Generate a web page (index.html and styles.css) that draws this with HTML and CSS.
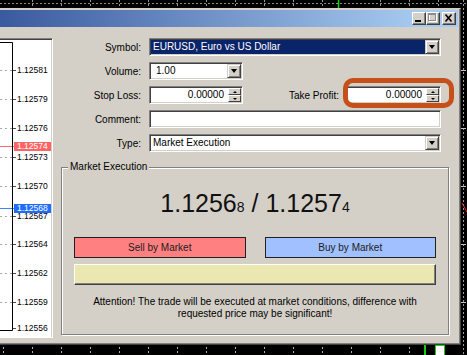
FILE: index.html
```html
<!DOCTYPE html>
<html lang="en">
<head>
    <meta charset="UTF-8">
    <meta name="viewport" content="width=device-width, initial-scale=1.0">
    <title>Order</title>
    <link rel="stylesheet" href="styles.css">
</head>
<body>
    <!-- chart canvas behind the dialog -->
    <svg class="backdrop" width="467" height="355">
        <line x1="0" y1="3.5" x2="467" y2="3.5" stroke="#8a8a8a" stroke-dasharray="2 2"/>
        <g stroke="#9a9a9a" stroke-dasharray="2 2">
            <line x1="32.5" y1="0" x2="32.5" y2="8"/><line x1="61.5" y1="0" x2="61.5" y2="8"/>
            <line x1="90.5" y1="0" x2="90.5" y2="8"/><line x1="119.5" y1="0" x2="119.5" y2="8"/>
            <line x1="148.5" y1="0" x2="148.5" y2="8"/><line x1="177.5" y1="0" x2="177.5" y2="8"/>
            <line x1="206.5" y1="0" x2="206.5" y2="8"/><line x1="235.5" y1="0" x2="235.5" y2="8"/>
            <line x1="264.5" y1="0" x2="264.5" y2="8"/><line x1="293.5" y1="0" x2="293.5" y2="8"/>
            <line x1="322.5" y1="0" x2="322.5" y2="8"/><line x1="380.5" y1="0" x2="380.5" y2="8"/>
            <line x1="409.5" y1="0" x2="409.5" y2="8"/><line x1="438.5" y1="0" x2="438.5" y2="8"/>
            <line x1="463.5" y1="0" x2="463.5" y2="355"/>
        </g>
        <line x1="338.5" y1="0" x2="338.5" y2="8" stroke="#10d010" stroke-width="1.5"/>
        <g stroke="#c0c0c0">
            <line x1="461" y1="70.5" x2="466" y2="70.5"/><line x1="461" y1="128.5" x2="466" y2="128.5"/>
            <line x1="461" y1="186.5" x2="466" y2="186.5"/><line x1="461" y1="244.5" x2="466" y2="244.5"/>
            <line x1="461" y1="302.5" x2="466" y2="302.5"/>
        </g>
        <line x1="462" y1="203" x2="467" y2="212" stroke="#ff2020"/>
        <g stroke="#b0b0b0" stroke-dasharray="2 2">
            <line x1="3.5" y1="347" x2="3.5" y2="355"/><line x1="32.5" y1="347" x2="32.5" y2="355"/>
            <line x1="61.5" y1="347" x2="61.5" y2="355"/><line x1="90.5" y1="347" x2="90.5" y2="355"/>
            <line x1="119.5" y1="347" x2="119.5" y2="355"/><line x1="148.5" y1="347" x2="148.5" y2="355"/>
            <line x1="177.5" y1="347" x2="177.5" y2="355"/><line x1="206.5" y1="347" x2="206.5" y2="355"/>
            <line x1="235.5" y1="347" x2="235.5" y2="355"/><line x1="264.5" y1="347" x2="264.5" y2="355"/>
            <line x1="293.5" y1="347" x2="293.5" y2="355"/><line x1="322.5" y1="347" x2="322.5" y2="355"/>
            <line x1="351.5" y1="347" x2="351.5" y2="355"/><line x1="380.5" y1="347" x2="380.5" y2="355"/>
            <line x1="409.5" y1="347" x2="409.5" y2="355"/>
        </g>
        <line x1="425" y1="345" x2="425" y2="355" stroke="#10d010" stroke-width="2"/>
        <rect x="435.5" y="345.5" width="9" height="10" fill="#fff" stroke="#10d010"/>
    </svg>

    <div class="window">
        <div class="caption">
            <span class="capbtn"><svg width="12" height="11"><rect x="2" y="7" width="6" height="2" fill="#000"/></svg></span>
            <span class="capbtn"><svg width="12" height="11"><rect x="2.5" y="1.5" width="7" height="7" fill="none" stroke="#fff"/><rect x="1.5" y="0.5" width="7" height="7" fill="none" stroke="#8c8c8c"/><line x1="1.5" y1="1.5" x2="8.5" y2="1.5" stroke="#8c8c8c"/></svg></span>
            <span class="capbtn close"><svg width="12" height="11"><path d="M2.5 1.5 L8.5 8.5 M8.5 1.5 L2.5 8.5" stroke="#000" stroke-width="1.6"/></svg></span>
        </div>

        <div class="client">
            <div class="tick-chart">
                <svg class="plot" width="51" height="298">
                    <g stroke="#a8a8a8" stroke-dasharray="2 3">
                        <line x1="0" y1="31.5" x2="12" y2="31.5"/><line x1="0" y1="60.5" x2="12" y2="60.5"/>
                        <line x1="0" y1="89.5" x2="12" y2="89.5"/><line x1="0" y1="118.5" x2="12" y2="118.5"/>
                        <line x1="0" y1="147.5" x2="12" y2="147.5"/><line x1="0" y1="177.5" x2="12" y2="177.5"/>
                        <line x1="0" y1="205.5" x2="12" y2="205.5"/><line x1="0" y1="234.5" x2="12" y2="234.5"/>
                        <line x1="0" y1="263.5" x2="12" y2="263.5"/>
                    </g>
                    <g stroke="#505050">
                        <line x1="13" y1="31.5" x2="16" y2="31.5"/><line x1="13" y1="60.5" x2="16" y2="60.5"/>
                        <line x1="13" y1="89.5" x2="16" y2="89.5"/><line x1="13" y1="118.5" x2="16" y2="118.5"/>
                        <line x1="13" y1="147.5" x2="16" y2="147.5"/><line x1="13" y1="177.5" x2="16" y2="177.5"/>
                        <line x1="13" y1="205.5" x2="16" y2="205.5"/><line x1="13" y1="234.5" x2="16" y2="234.5"/>
                        <line x1="13" y1="263.5" x2="16" y2="263.5"/><line x1="13" y1="289.5" x2="16" y2="289.5"/>
                    </g>
                    <line x1="0" y1="107.5" x2="14" y2="107.5" stroke="#ff6a6a"/>
                    <line x1="0" y1="169.5" x2="14" y2="169.5" stroke="#3a86ff"/>
                    <path d="M0 3.5 H12.5 V291.5 H0" fill="none" stroke="#000"/>
                </svg>
                <span class="tick" style="top:27px">1.12581</span>
                <span class="tick" style="top:56px">1.12579</span>
                <span class="tick" style="top:85px">1.12576</span>
                <span class="tick" style="top:114px">1.12573</span>
                <span class="tick" style="top:143px">1.12570</span>
                <span class="tick" style="top:173px">1.12567</span>
                <span class="tick" style="top:201px">1.12564</span>
                <span class="tick" style="top:230px">1.12562</span>
                <span class="tick" style="top:259px">1.12559</span>
                <span class="tick" style="top:285px">1.12556</span>
                <span class="tick bid-tag" style="top:103px">1.12574</span>
                <span class="tick ask-tag" style="top:165px">1.12568</span>
            </div>

            <div class="form">
                <div class="row">
                    <label class="lbl">Symbol:</label>
                    <div class="field full">
                        <span class="val picked">EURUSD, Euro vs US Dollar</span>
                        <span class="drop"><i></i></span>
                    </div>
                </div>
                <div class="row">
                    <label class="lbl">Volume:</label>
                    <div class="field short">
                        <span class="val vol">1.00</span>
                        <span class="drop"><i></i></span>
                    </div>
                </div>
                <div class="row">
                    <label class="lbl">Stop Loss:</label>
                    <div class="field short">
                        <span class="val num">0.00000</span>
                        <span class="spin"><b><i class="up"></i></b><b><i class="dn"></i></b></span>
                    </div>
                    <label class="lbl tp-lbl">Take Profit:</label>
                    <div class="field tp">
                        <span class="val num">0.00000</span>
                        <span class="spin"><b><i class="up"></i></b><b><i class="dn"></i></b></span>
                        <span class="mark"></span>
                    </div>
                </div>
                <div class="row">
                    <label class="lbl">Comment:</label>
                    <div class="field full"></div>
                </div>
                <div class="row">
                    <label class="lbl">Type:</label>
                    <div class="field full">
                        <span class="val">Market Execution</span>
                        <span class="drop"><i></i></span>
                    </div>
                </div>

                <div class="group">
                    <span class="legend">Market Execution</span>
                    <div class="quote">1.1256<small>8</small> / 1.1257<small>4</small></div>
                    <div class="actions">
                        <button class="sell">Sell by Market</button>
                        <button class="buy">Buy by Market</button>
                    </div>
                    <div class="status"></div>
                    <p class="note">Attention! The trade will be executed at market conditions, difference with<br>requested price may be significant!</p>
                </div>
            </div>
        </div>
    </div>
</body>
</html>
```

FILE: styles.css
```css
*{margin:0;padding:0;box-sizing:border-box;}
html,body{width:467px;height:355px;overflow:hidden;}
body{
    position:relative;
    background:#000;
    padding-top:8px;
    font-family:"Liberation Sans",Arial,sans-serif;
    font-size:10px;
    color:#000;
}
.backdrop{position:absolute;left:0;top:0;}

/* dialog frame */
.window{
    position:relative;
    width:461px;
    height:337px;
    background:#d4d0c8;
    border-top:1px solid #d4d0c8;
    border-right:1px solid #404040;
    border-bottom:1px solid #404040;
    box-shadow:inset -1px -1px #808080;
    padding:1px 2px 0 0;
    display:flex;
    flex-direction:column;
}
.caption{
    height:17px;
    background:linear-gradient(to right,#3a5a9f 0,#a6caf0 420px);
    display:flex;
    align-items:center;
    justify-content:flex-end;
    padding-right:2px;
}
.capbtn{
    width:14px;
    height:13px;
    background:#d4d0c8;
    border:1px solid;
    border-color:#fff #404040 #404040 #fff;
    box-shadow:inset -1px -1px #808080;
    display:flex;
    align-items:center;
    justify-content:center;
}
.capbtn.close{margin-left:2px;}

.client{flex:1;display:flex;}

/* tick chart on the left */
.tick-chart{
    position:relative;
    width:53px;
    height:300px;
    margin-top:11px;
    background:#fff;
    border-top:1px solid #808080;
    border-right:1px solid #fff;
    border-bottom:1px solid #fff;
    box-shadow:inset 0 1px #404040,inset -1px 0 #d4d0c8;
}
.plot{display:block;}
.tick{
    position:absolute;
    left:17px;
    font-size:8.5px;
    line-height:9px;
    color:#000;
}
.bid-tag,.ask-tag{left:14px;width:37px;padding-left:3px;color:#fff;}
.bid-tag{background:#ff6464;}
.ask-tag{background:#1f6dff;}

/* order form */
.form{
    width:404px;
    padding-top:11px;
    display:flex;
    flex-direction:column;
    gap:6px;
}
.row{display:flex;align-items:center;height:18px;}
.lbl{width:88px;text-align:right;margin-right:8px;}
.tp-lbl{width:96px;margin-right:7px;}
.field{
    position:relative;
    height:18px;
    background:#fff;
    border:1px solid;
    border-color:#808080 #fff #fff #808080;
    box-shadow:inset 1px 1px #404040,inset -1px -1px #d4d0c8;
    padding:1px;
    display:flex;
    align-items:center;
}
.full{width:292px;}
.short{width:94px;}
.tp{width:95px;}
.val{flex:1;height:14px;line-height:14px;padding-left:2px;white-space:nowrap;}
.picked{background:#0a246a;color:#fff;}
.vol{padding-left:5px;}
.num{text-align:right;padding-right:4px;}

.drop{
    width:14px;
    height:14px;
    background:#d4d0c8;
    border:1px solid;
    border-color:#d4d0c8 #404040 #404040 #d4d0c8;
    box-shadow:inset 1px 1px #fff,inset -1px -1px #808080;
    display:flex;
    align-items:center;
    justify-content:center;
}
.drop i{
    border-left:3.5px solid transparent;
    border-right:3.5px solid transparent;
    border-top:4px solid #000;
}
.spin{width:13px;height:14px;display:flex;flex-direction:column;}
.spin b{
    flex:1;
    background:#d4d0c8;
    border:1px solid;
    border-color:#fff #404040 #404040 #fff;
    display:flex;
    align-items:center;
    justify-content:center;
}
.spin i{border-left:2.5px solid transparent;border-right:2.5px solid transparent;}
.spin .up{border-bottom:2px solid #000;}
.spin .dn{border-top:2px solid #000;}

/* orange highlight drawn over the Take Profit box */
.mark{
    position:absolute;
    left:-4px;
    top:-9px;
    width:111px;
    height:30px;
    border:5px solid #c5501a;
    border-radius:10px;
}

/* Market Execution group */
.group{
    margin:9px 0 0 8px;
    width:388px;
    height:168px;
    border:1px solid #808080;
    box-shadow:inset 1px 1px #fff,1px 1px #fff;
    padding:0 12px;
    display:flex;
    flex-direction:column;
}
.legend{
    align-self:flex-start;
    margin:-7px 0 0 -6px;
    padding:0 2px;
    line-height:12px;
    background:#d4d0c8;
}
.quote{
    margin-top:17px;
    text-align:center;
    font-size:25px;
    line-height:26px;
    color:#111;
}
.quote small{font-size:14px;}
.actions{
    margin-top:17px;
    display:grid;
    grid-template-columns:1fr 1fr;
    gap:19px;
}
.actions button{
    height:21px;
    font-family:inherit;
    font-size:10px;
    color:#202020;
    border:1px solid;
}
.sell{background:#ff8080;border-color:#ffc8c8 #8a4040 #8a4040 #ffc8c8;}
.buy{background:#a0c0ff;border-color:#dce8ff #506a9c #506a9c #dce8ff;}
.status{
    margin-top:6px;
    height:21px;
    background:#ebe7b0;
    border:1px solid;
    border-color:#fff #404040 #404040 #fff;
    box-shadow:inset -1px -1px #808080;
}
.note{
    margin-top:11px;
    text-align:center;
    line-height:12px;
}
```
